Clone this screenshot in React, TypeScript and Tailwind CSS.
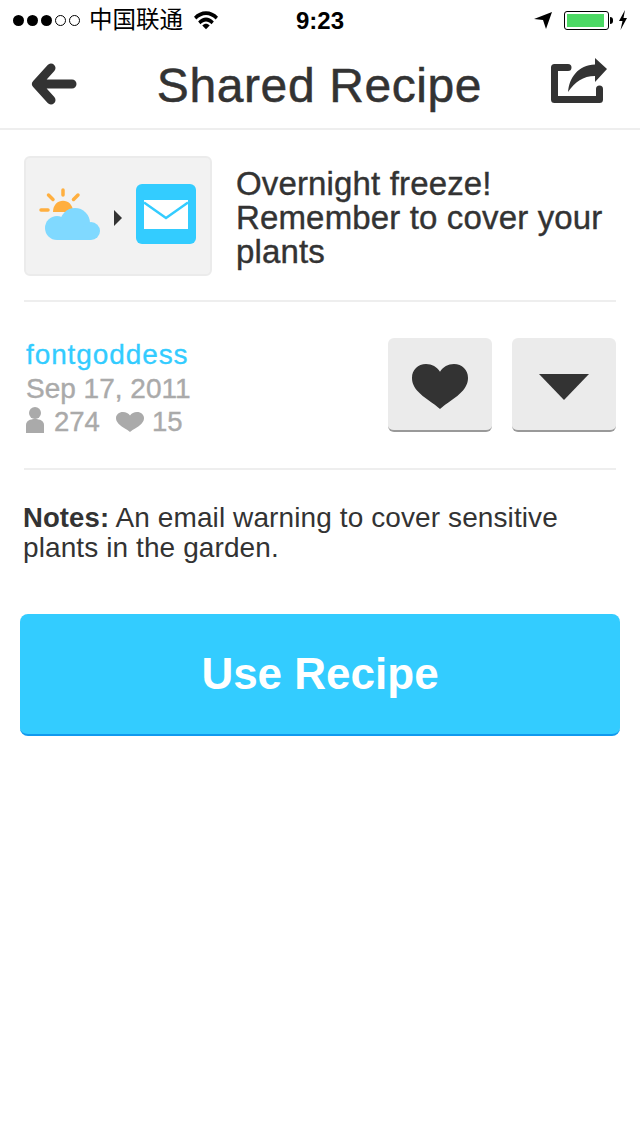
const font = { fontFamily: "'Liberation Sans', 'Noto Sans CJK SC', sans-serif" };

function Heart({ className }: { className: string }) {
  return (
    <svg viewBox="0 0 56 46" preserveAspectRatio="none" className={className} fill="currentColor">
      <path d="M28 46 C22 40 12 35 5 27 C1 22 0 18 0 14 C0 6 6 0 14 0 C20 0 25 3 28 8 C31 3 36 0 42 0 C50 0 56 6 56 14 C56 18 55 22 51 27 C44 35 34 40 28 46 Z" />
    </svg>
  );
}

function StatusBar() {
  return (
    <div className="relative flex h-10 items-center text-black">
      <div className="flex items-center pl-[13px]">
        {[0, 1, 2].map((i) => (
          <span key={i} className="mr-[3px] h-[11px] w-[11px] rounded-full bg-black" />
        ))}
        {[0, 1].map((i) => (
          <span key={i} className="mr-[3px] h-[11px] w-[11px] rounded-full border border-black" />
        ))}
        <span className="ml-[6px] pt-[2px] text-[23.500px] leading-none">中国联通</span>
        <svg viewBox="0 0 26 20" className="ml-[11px] h-5 w-[24px]">
          <path d="M0 6.500 C7 -1.500 19 -1.500 26 6.500 L23.500 9.500 C17 3 9 3 2.500 9.500 Z" fill="#000" />
          <path d="M4.500 11.500 C10 6 16 6 21.500 11.500 L19 14.500 C15 10.500 11 10.500 7 14.500 Z" fill="#000" />
          <path d="M9 16 C11.500 13.500 14.500 13.500 17 16 L13 20 Z" fill="#000" />
        </svg>
      </div>
      <span className="absolute left-0 right-0 pt-[2px] text-center text-[24px] font-bold leading-none">9:23</span>
      <div className="ml-auto flex items-center pr-[12px]">
        <svg viewBox="0 0 20 20" className="mr-[11px] h-5 w-5">
          <path d="M1 9 L19 2 L13 19 L10 10 Z" fill="#000" />
        </svg>
        <div className="h-[19px] w-[45px] rounded-[3px] border border-black p-[2px]">
          <div className="h-full w-[37px] bg-[#4cd964]" />
        </div>
        <span className="ml-[1px] h-[7px] w-[3px] rounded-r-full bg-black" />
        <svg viewBox="0 0 10 20" className="ml-[5px] h-5 w-[10px]">
          <path d="M7 0 L1 11 L4.500 11 L2.500 20 L9 8 L5.500 8 Z" fill="#000" />
        </svg>
      </div>
    </div>
  );
}

function NavBar() {
  return (
    <div className="flex h-[90px] items-center justify-between border-b-2 border-[#eeeeee] pl-[31px] pr-[33px] pt-[4px] text-[#333333]">
      <svg viewBox="0 0 46 42" className="mb-[4px] h-[42px] w-[46px]">
        <path d="M20 5 L5.500 21 L20 37 M6 21 L41 21" fill="none" stroke="#333333" strokeWidth="9" strokeLinecap="round" strokeLinejoin="round" />
      </svg>
      <h1 className="ml-[11px] text-[48px] leading-none tracking-[0.6px] [-webkit-text-stroke:0.5px_#333333]">Shared Recipe</h1>
      <svg viewBox="0 0 56 46" className="mb-[10px] h-[46px] w-[56px]">
        <path d="M17 9.500 L3.500 9.500 L3.500 41.500 L48.500 41.500 L48.500 31" fill="none" stroke="#333333" strokeWidth="7" strokeLinecap="round" strokeLinejoin="round" />
        <path d="M17 34 C18 20 27 7 44 6.500 L44 0 L56 11 L44 24 L44 18 C32 18 24 24 17 34 Z" fill="#333333" />
      </svg>
    </div>
  );
}

function RecipeCard() {
  return (
    <div className="flex h-[120px] w-[188px] shrink-0 items-center rounded-[6px] border-2 border-[#ebebeb] bg-[#f2f2f2] pl-[12px]">
      <svg viewBox="38 186 64 60" className="h-[60px] w-[64px]">
        <g stroke="#ffaf3f" strokeWidth="3.500" strokeLinecap="round">
          <path d="M63 190 L63 195" />
          <path d="M48.500 195 L53 199.500" />
          <path d="M78 195 L73.500 199.500" />
          <path d="M41 210 L48 210" />
        </g>
        <path d="M53 212 C53 197 73 197 73 212 Z" fill="#ffaf3f" />
        <g fill="#80d9ff">
          <circle cx="57" cy="228" r="12" />
          <circle cx="75" cy="223" r="15" />
          <circle cx="91" cy="231" r="9" />
          <rect x="57" y="228" width="34" height="12" />
        </g>
      </svg>
      <span className="ml-[12px] mt-[4px] h-0 w-0 border-y-[8px] border-l-[8px] border-y-transparent border-l-[#333333]" />
      <div className="mb-[4px] ml-[14px] flex h-[60px] w-[60px] items-center justify-center rounded-[6px] bg-[#33ccff]">
        <svg viewBox="0 0 44 29" className="h-[29px] w-[44px]">
          <path d="M0 0 H44 V29 H0 Z" fill="#ffffff" />
          <path d="M0 2.500 L22 18 L44 2.500" fill="none" stroke="#33ccff" strokeWidth="2.500" />
        </svg>
      </div>
    </div>
  );
}

function SquareButton({ children }: { children: React.ReactNode }) {
  return (
    <button className="flex h-[94px] w-[104px] items-center justify-center rounded-[6px] border-b-2 border-[#999999] bg-[#ebebeb] text-[#333333]">
      {children}
    </button>
  );
}

function App() {
  return (
    <div style={font} className="min-h-[1136px] bg-white">
      <StatusBar />
      <NavBar />
      <div className="mx-6 flex border-b-2 border-[#eeeeee] pb-6 pt-[26px]">
        <RecipeCard />
        <p className="ml-6 mt-[11px] text-[33px] leading-[34px] tracking-[0.15px] text-[#333333] [-webkit-text-stroke:0.4px_#333333]">
          Overnight freeze! Remember to cover your plants
        </p>
      </div>
      <div className="mx-6 flex justify-between border-b-2 border-[#eeeeee] py-[36px]">
        <div className="h-[94px] pl-[2px] pt-[1px]">
          <div className="text-[28px] leading-[32px] tracking-[0.9px] text-[#33ccff] [-webkit-text-stroke:0.3px_#33ccff]">fontgoddess</div>
          <div className="text-[28px] leading-[36px] text-[#aaaaaa] [-webkit-text-stroke:0.4px_#aaaaaa]">Sep 17, 2011</div>
          <div className="flex h-[30px] items-center text-[27.500px] leading-none text-[#aaaaaa] [-webkit-text-stroke:0.4px_#aaaaaa]">
            <svg viewBox="0 0 18 26" className="mb-[4px] h-[26px] w-[18px]">
              <circle cx="9" cy="6" r="6" fill="#aaaaaa" />
              <path d="M0 26 L0 18 C0 14 4 12 9 12 C14 12 18 14 18 18 L18 26 Z" fill="#aaaaaa" />
            </svg>
            <span className="ml-[10px]">274</span>
            <Heart className="ml-[16px] h-[20px] w-[28px] text-[#aaaaaa]" />
            <span className="ml-[8px]">15</span>
          </div>
        </div>
        <div className="flex gap-5">
          <SquareButton>
            <Heart className="mt-[4px] h-[45px] w-[56px]" />
          </SquareButton>
          <SquareButton>
            <span className="mt-[6px] h-0 w-0 border-x-[25px] border-t-[26px] border-x-transparent border-t-[#333333]" />
          </SquareButton>
        </div>
      </div>
      <p className="mx-[23px] mt-[33px] text-[28px] leading-[30px] tracking-[0.1px] text-[#333333]">
        <b className="text-[27.500px]">Notes:</b> An email warning to cover sensitive plants in the garden.
      </p>
      <button className="mx-5 mt-[51px] flex h-[122px] w-[600px] items-center justify-center rounded-[8px] border-b-2 border-[#1199ee] bg-[#33ccff] text-[44px] font-bold text-white">
        Use Recipe
      </button>
    </div>
  );
}

export default App;
